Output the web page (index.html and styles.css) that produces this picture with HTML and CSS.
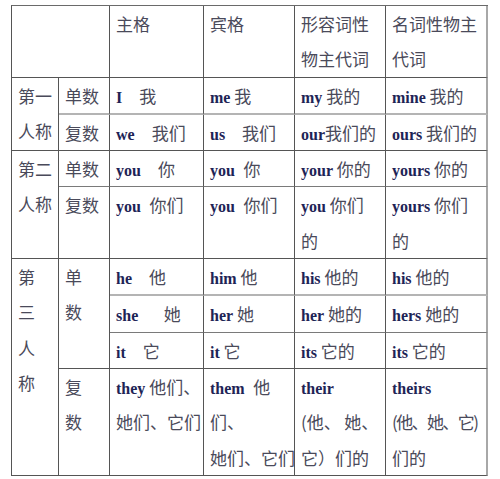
FILE: index.html
```html
<!DOCTYPE html>
<html lang="zh">
<head>
<meta charset="utf-8">
<title>人称代词表</title>
<link rel="stylesheet" href="styles.css">
</head>
<body>
<table class="pron">
  <colgroup>
    <col class="w1"><col class="w2"><col class="w3"><col class="w4"><col class="w5"><col class="w6">
  </colgroup>
  <tr>
    <td colspan="2"></td>
    <td>主格</td>
    <td>宾格</td>
    <td>形容词性<br>物主代词</td>
    <td>名词性物主<br>代词</td>
  </tr>
  <tr class="soft">
    <td rowspan="2">第一<br>人称</td>
    <td>单数</td>
    <td><b>I</b>　我</td>
    <td><b>me</b> 我</td>
    <td><b>my</b> 我的</td>
    <td><b>mine</b> 我的</td>
  </tr>
  <tr>
    <td>复数</td>
    <td><b>we</b>　我们</td>
    <td><b>us</b>　我们</td>
    <td><b>our</b>我们的</td>
    <td><b>ours</b> 我们的</td>
  </tr>
  <tr class="mid">
    <td rowspan="2">第二<br>人称</td>
    <td>单数</td>
    <td><b>you</b>　你</td>
    <td><b>you</b>&ensp;你</td>
    <td><b>your</b> 你的</td>
    <td><b>yours</b> 你的</td>
  </tr>
  <tr>
    <td>复数</td>
    <td><b>you</b>&ensp;你们</td>
    <td><b>you</b>&ensp;你们</td>
    <td><b>you</b> 你们<br>的</td>
    <td><b>yours</b> 你们<br>的</td>
  </tr>
  <tr class="soft">
    <td rowspan="4">第<br>三<br>人<br>称</td>
    <td rowspan="3">单<br>数</td>
    <td><b>he</b>　他</td>
    <td><b>him</b> 他</td>
    <td><b>his</b> 他的</td>
    <td><b>his</b> 他的</td>
  </tr>
  <tr class="mid">
    <td><b>she</b>　&ensp;她</td>
    <td><b>her</b> 她</td>
    <td><b>her</b> 她的</td>
    <td><b>hers</b> 她的</td>
  </tr>
  <tr>
    <td><b>it</b>　它</td>
    <td><b>it</b> 它</td>
    <td><b>its</b> 它的</td>
    <td><b>its</b> 它的</td>
  </tr>
  <tr>
    <td>复<br>数</td>
    <td><b>they</b> 他们、<br>她们、它们</td>
    <td><b>them</b>&ensp;他<br>们、<br>她们、它们</td>
    <td><b>their</b><br>(他、&thinsp;她、<br>它）们的</td>
    <td><b>theirs</b><br><span class="tight">(他、她、它)</span><br>们的</td>
  </tr>
</table>
</body>
</html>
```

FILE: styles.css
```css
html, body {
  background: #ffffff;
}

body {
  margin: 5px 0 0 11px;
}

.pron {
  table-layout: fixed;
  width: 477px;
  border-collapse: separate;
  border-spacing: 0;
  border-top: 1px solid #6a6a6a;
  border-left: 1px solid #555555;
  font-family: "Noto Sans CJK SC", "Noto Sans", sans-serif;
  font-size: 17px;
  color: #4a4a5a;
}

.w1 { width: 47px; }
.w2 { width: 51px; }
.w3 { width: 94px; }
.w4 { width: 91px; }
.w5 { width: 91px; }
.w6 { width: 102px; }

.pron td {
  vertical-align: top;
  padding: 0 0 0 6px;
  line-height: 35.3px;
  white-space: nowrap;
  overflow: visible;
  border-right: 1px solid #555555;
  border-bottom: 1px solid #555555;
}

.pron td:last-child {
  border-right: 2px solid #a8a8a8;
}

.pron tr.soft td:not([rowspan]) {
  border-bottom: 2px solid #b4b4b4;
}

.pron tr.mid td:not([rowspan]) {
  border-bottom-color: #7a7a7a;
}

.pron b {
  font-family: "Liberation Serif", "DejaVu Serif", serif;
  font-weight: 700;
  font-size: 16px;
  line-height: 1;
  color: #1e2456;
}

.tight {
  letter-spacing: -1.6px;
}
```
